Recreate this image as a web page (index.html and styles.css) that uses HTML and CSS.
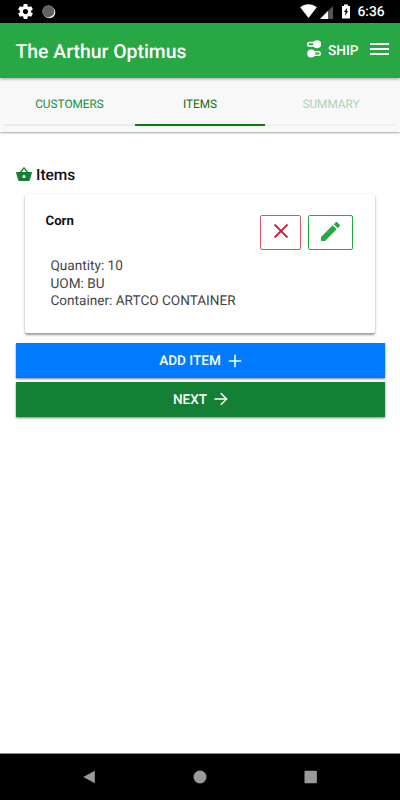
FILE: index.html
```html
<!DOCTYPE html>
<html lang="en">
<head>
<meta charset="utf-8">
<title>The Arthur Optimus</title>
<link rel="stylesheet" href="styles.css">
</head>
<body>
<div class="screen">
  <div class="status">
    <svg class="gear" viewBox="2 2 20 20"><path fill="#fff" d="M19.43 12.98c.04-.32.07-.64.07-.98s-.03-.66-.07-.98l2.11-1.65c.19-.15.24-.42.12-.64l-2-3.46c-.12-.22-.39-.3-.61-.22l-2.49 1c-.52-.4-1.08-.73-1.69-.98l-.38-2.65C14.46 2.18 14.25 2 14 2h-4c-.25 0-.46.18-.49.42l-.38 2.65c-.61.25-1.17.59-1.69.98l-2.49-1c-.23-.09-.49 0-.61.22l-2 3.46c-.13.22-.07.49.12.64l2.11 1.65c-.04.32-.07.65-.07.98s.03.66.07.98l-2.11 1.65c-.19.15-.24.42-.12.64l2 3.46c.12.22.39.3.61.22l2.49-1c.52.4 1.08.73 1.69.98l.38 2.65c.03.24.24.42.49.42h4c.25 0 .46-.18.49-.42l.38-2.65c.61-.25 1.17-.59 1.69-.98l2.49 1c.23.09.49 0 .61-.22l2-3.46c.12-.22.07-.49-.12-.64l-2.11-1.65zM12 15.5c-1.93 0-3.500-1.570-3.500-3.500s1.570-3.500 3.500-3.500 3.500 1.570 3.500 3.500-1.570 3.500-3.500 3.500z"/></svg>
    <svg class="sync" viewBox="0 0 14 14"><circle cx="7.300" cy="7.300" r="6" fill="#fff"/><circle cx="6.300" cy="6.300" r="6.100" fill="#626262"/><circle cx="6.300" cy="6.300" r="5.500" fill="none" stroke="#808080" stroke-width="1" stroke-dasharray="1.500 1"/></svg>
    <svg class="wifi" viewBox="0 0 17 14"><path fill="#fff" d="M.2 3.200C5-.8 12-.8 16.800 3.200L8.500 14z"/></svg>
    <svg class="cell" viewBox="0 0 13 13"><path fill="#555" d="M13 0v13H0z"/><path fill="#fff" d="M8 5v8H0z"/></svg>
    <svg class="battery" viewBox="0 0 8 14"><path fill="#fff" d="M2 0h4v1.500h2V14H0V1.500h2z"/><path fill="#000" d="M5.300 3.200 1.900 7.500h1.700L2.800 11.300l3.400-4.600H4.600z"/></svg>
    <span class="clock">6:36</span>
  </div>
  <header class="appbar">
    <h1>The Arthur Optimus</h1>
    <svg class="toggles" viewBox="0 0 14 18"><g fill="none" stroke="#fff" stroke-width="1.500"><rect x=".75" y="2.400" width="11" height="3.600" rx="1.800"/><rect x="2.250" y="11.700" width="11" height="3.600" rx="1.800"/></g><circle cx="10.200" cy="4.200" r="4" fill="#fff"/><circle cx="4.200" cy="13.500" r="4" fill="#fff"/></svg>
    <span class="ship">SHIP</span>
    <svg class="menu" viewBox="0 0 19 14"><path fill="#fff" d="M0 1h19v2H0zM0 6h19v2H0zM0 11h19v2H0z"/></svg>
  </header>
  <nav class="tabs">
    <span class="tab">CUSTOMERS</span>
    <span class="tab active">ITEMS</span>
    <span class="tab disabled">SUMMARY</span>
  </nav>
  <main>
    <h2>
      <svg class="basket" viewBox="0 0 16 14"><path fill="none" stroke="#138035" stroke-width="1.300" d="M4.500 5.500 8 .9l3.500 4.600"/><path fill="#138035" fill-rule="evenodd" d="M.7 5h14.600q.8 0 .6.8l-2 7.200q-.3 1-1.200 1H3.300q-.9 0-1.200-1L.1 5.800Q-.1 5 .7 5zM8 7.900a1.600 1.600 0 1 0 0 3.200 1.600 1.600 0 0 0 0-3.200z"/></svg>
      <span>Items</span>
    </h2>
    <section class="card">
      <div class="cardhead">
        <h3>Corn</h3>
        <div class="iconbtn remove"><svg viewBox="0 0 14 14"><path fill="none" stroke="#c9142e" stroke-width="1.800" d="M.5.5l13 13M13.500.5l-13 13"/></svg></div>
        <div class="iconbtn edit"><svg viewBox="3 3 18 18"><path fill="#28a745" d="M3 17.250V21h3.750L17.810 9.940l-3.750-3.750L3 17.250zM20.710 7.040c.39-.39.39-1.020 0-1.410l-2.340-2.340c-.39-.39-1.020-.39-1.410 0l-1.830 1.830 3.750 3.750 1.830-1.830z"/></svg></div>
      </div>
      <div class="details">
        <p>Quantity: 10</p>
        <p>UOM: BU</p>
        <p>Container: ARTCO CONTAINER</p>
      </div>
    </section>
    <div class="btn add"><span>ADD ITEM</span><svg viewBox="0 0 14 14"><path fill="none" stroke="#fff" stroke-width="1.500" d="M7 .8v12.400M.8 7h12.400"/></svg></div>
    <div class="btn next"><span>NEXT</span><svg viewBox="0 0 14 14"><path fill="none" stroke="#fff" stroke-width="1.500" d="M.5 7h12M6.800 1.200 12.600 7l-5.800 5.800"/></svg></div>
  </main>
  <footer class="navbar">
    <svg viewBox="0 0 14 14"><path fill="#9a9a9a" d="M.3 7 11.800.8v12.400z"/></svg>
    <svg viewBox="0 0 14 14"><circle cx="7" cy="7" r="6.500" fill="#9a9a9a"/></svg>
    <svg viewBox="0 0 14 14"><rect x=".5" y=".8" width="12.400" height="12.400" rx="1" fill="#9a9a9a"/></svg>
  </footer>
</div>
</body>
</html>
```
FILE: styles.css
```css
* { box-sizing: border-box; margin: 0; padding: 0; }
body { font-family: Roboto, sans-serif; background: #fff; text-rendering: geometricPrecision; }
svg { display: block; flex: none; }
.screen { width: 400px; height: 800px; display: flex; flex-direction: column; overflow: hidden; }
.status { height: 23px; background: #000; display: flex; padding-left: 18px; }
.gear { width: 15px; height: 15px; margin-top: 4px; }
.sync { width: 14px; height: 14px; margin: 5px 0 0 9px; }
.wifi { width: 17px; height: 14px; margin: 4px 0 0 244px; }
.cell { width: 13px; height: 13px; margin: 6px 0 0 3px; }
.battery { width: 8px; height: 15px; margin: 4px 0 0 9px; }
.clock { color: #fff; font-size: 13.800px; font-weight: 500; line-height: 25px; margin-left: 7.500px; }
.appbar { height: 55px; background: #28a745; color: #fff; display: flex; align-items: center; padding-left: 15.500px; position: relative; z-index: 2; box-shadow: 0 1px 3px rgba(0,0,0,.35); }
.appbar h1 { font-size: 19.400px; font-weight: 500; line-height: 24px; width: 291.500px; margin-top: 2px; white-space: nowrap; }
.toggles { width: 14px; height: 18px; margin-top: -3px; }
.ship { font-size: 13.700px; font-weight: 500; width: 42px; margin-left: 7px; }
.menu { width: 19px; height: 14px; margin-top: -3px; }
.tabs { height: 54px; background: #f8f8f8; display: grid; grid-template-columns: 131px 130px 131px; padding: 0 4px; box-shadow: 0 1px 2px rgba(0,0,0,.35); }
.tab { height: 48px; text-align: center; font-size: 11.800px; line-height: 53px; color: #17903f; border-bottom: 2px solid #e9e9e9; }
.active { color: #107010; border-bottom-color: #087a10; }
.disabled { color: #a9d3b6; border-bottom-color: #f0f0f0; padding-left: 1px; }
main { flex: 1; padding: 34px 15px 0 16px; }
h2 { display: flex; align-items: center; height: 18px; font-size: 15.500px; font-weight: 500; color: #111; }
.basket { width: 16px; height: 14px; margin: -3px 4px 0 0; }
.card { width: 350px; height: 139px; margin: 10px 0 0 9px; border-radius: 2px; background: #fff; box-shadow: 0 1.500px 2.500px rgba(0,0,0,.4); padding: 20px 22px 0 20.500px; }
.cardhead { display: flex; height: 44px; }
h3 { font-size: 13.200px; line-height: 13px; font-weight: 700; flex: 1; color: #111; margin-top: 1px; }
.iconbtn { height: 35px; border: 1px solid; border-radius: 2px; display: flex; justify-content: center; margin-top: 1px; }
.remove { width: 41px; border-color: #d45563; margin-right: 7px; }
.edit { width: 45px; border-color: #28a745; }
.remove svg { width: 14px; height: 14px; margin-top: 8px; }
.edit svg { width: 19px; height: 19px; margin-top: 6px; }
.details { padding-left: 5px; font-size: 13.600px; line-height: 17.500px; color: #444; font-weight: 400; }
.btn { height: 35px; color: #fff; display: flex; align-items: center; justify-content: center; font-size: 13.600px; font-weight: 500; box-shadow: 0 1px 2px rgba(0,0,0,.5); }
.btn svg { width: 14px; height: 14px; margin: 0 0 0 7px; }
.add { background: #007bff; margin-top: 10px; }
.next { background: #138035; margin-top: 4px; }
.next svg { margin-top: -1px; }
.navbar { height: 47px; border-top: 1px solid #888; background: #000; display: grid; grid-template-columns: 111px 110px 111px; justify-content: center; justify-items: center; align-items: center; }
.navbar svg { width: 14px; height: 14px; }
```
